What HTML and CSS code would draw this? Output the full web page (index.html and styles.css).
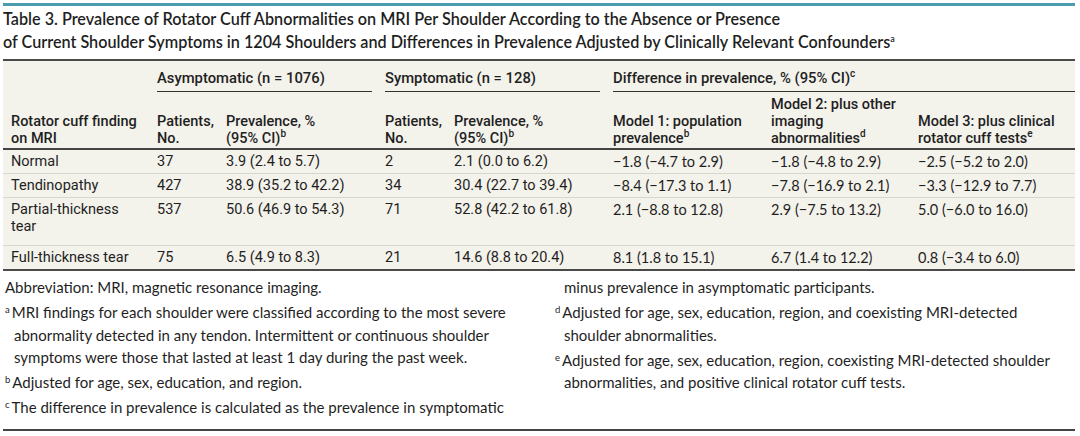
FILE: index.html
```html
<!DOCTYPE html>
<html lang="en">
<head>
<meta charset="utf-8">
<title>Table 3</title>
<link rel="stylesheet" href="styles.css">
</head>
<body>
<div class="page">
  <div class="topbar"></div>
  <h1 class="title">Table 3. Prevalence of Rotator Cuff Abnormalities on MRI Per Shoulder According to the Absence or Presence<br>of Current Shoulder Symptoms in 1204 Shoulders and Differences in Prevalence Adjusted by Clinically Relevant Confounders<sup>a</sup></h1>
  <table class="data">
    <colgroup>
      <col class="c1"><col class="c2"><col class="c3"><col class="c4"><col class="c5"><col class="c6"><col class="c7"><col class="c8">
    </colgroup>
    <thead>
      <tr class="group-row">
        <th></th>
        <th colspan="2"><span class="group">Asymptomatic (n = 1076)</span></th>
        <th colspan="2"><span class="group">Symptomatic (n = 128)</span></th>
        <th colspan="3"><span class="group last">Difference in prevalence, % (95% CI)<sup>c</sup></span></th>
      </tr>
      <tr class="head-row">
        <th class="first">Rotator cuff finding<br>on MRI</th>
        <th>Patients,<br>No.</th>
        <th>Prevalence, %<br>(95% CI)<sup>b</sup></th>
        <th>Patients,<br>No.</th>
        <th>Prevalence, %<br>(95% CI)<sup>b</sup></th>
        <th>Model 1: population<br>prevalence<sup>b</sup></th>
        <th>Model 2: plus other<br>imaging<br>abnormalities<sup>d</sup></th>
        <th>Model 3: plus clinical<br>rotator cuff tests<sup>e</sup></th>
      </tr>
    </thead>
    <tbody>
      <tr>
        <td class="first">Normal</td><td>37</td><td>3.9 (2.4 to 5.7)</td><td>2</td><td>2.1 (0.0 to 6.2)</td>
        <td class="diff">−1.8 (−4.7 to 2.9)</td><td class="diff">−1.8 (−4.8 to 2.9)</td><td class="diff">−2.5 (−5.2 to 2.0)</td>
      </tr>
      <tr>
        <td class="first">Tendinopathy</td><td>427</td><td>38.9 (35.2 to 42.2)</td><td>34</td><td>30.4 (22.7 to 39.4)</td>
        <td class="diff">−8.4 (−17.3 to 1.1)</td><td class="diff">−7.8 (−16.9 to 2.1)</td><td class="diff">−3.3 (−12.9 to 7.7)</td>
      </tr>
      <tr class="tall">
        <td class="first">Partial-thickness<br>tear</td><td>537</td><td>50.6 (46.9 to 54.3)</td><td>71</td><td>52.8 (42.2 to 61.8)</td>
        <td class="diff">2.1 (−8.8 to 12.8)</td><td class="diff">2.9 (−7.5 to 13.2)</td><td class="diff">5.0 (−6.0 to 16.0)</td>
      </tr>
      <tr>
        <td class="first">Full-thickness tear</td><td>75</td><td>6.5 (4.9 to 8.3)</td><td>21</td><td>14.6 (8.8 to 20.4)</td>
        <td class="diff">8.1 (1.8 to 15.1)</td><td class="diff">6.7 (1.4 to 12.2)</td><td class="diff">0.8 (−3.4 to 6.0)</td>
      </tr>
    </tbody>
  </table>
  <div class="notes">
    <p class="abbr">Abbreviation: MRI, magnetic resonance imaging.</p>
    <p class="fn"><sup>a</sup>MRI findings for each shoulder were classified according to the most severe abnormality detected in any tendon. Intermittent or continuous shoulder symptoms were those that lasted at least 1 day during the past week.</p>
    <p class="fn"><sup>b</sup>Adjusted for age, sex, education, and region.</p>
    <p class="fn"><sup>c</sup>The difference in prevalence is calculated as the prevalence in symptomatic minus prevalence in asymptomatic participants.</p>
    <p class="fn"><sup>d</sup>Adjusted for age, sex, education, region, and coexisting MRI-detected shoulder abnormalities.</p>
    <p class="fn"><sup>e</sup>Adjusted for age, sex, education, region, coexisting MRI-detected shoulder abnormalities, and positive clinical rotator cuff tests.</p>
  </div>
</div>
</body>
</html>
```
FILE: styles.css
```css
html, body {
  margin: 0;
  padding: 0;
  background: #ffffff;
  color: #1f1f1f;
}

.page {
  width: 1072px;
  margin-left: 3px;
  padding-top: 3px;
}

.topbar {
  height: 3px;
  background: #4b9bb1;
}

.title {
  margin: 0 0 6px;
  padding-top: 1px;
  font-family: Lato, "Open Sans", sans-serif;
  font-weight: 600;
  font-size: 16.2px;
  line-height: 23px;
  color: #1f1f1f;
}

.title sup {
  font-size: 9px;
  line-height: 0;
  vertical-align: 6px;
}

.data {
  width: 1072px;
  table-layout: fixed;
  border-collapse: collapse;
  background: #f3f2eb;
  border-top: 2px solid #4a4a4a;
  border-bottom: 2px solid #4a4a4a;
  font-family: Roboto, "DejaVu Sans Condensed", sans-serif;
  font-size: 14.5px;
  color: #1f1f1f;
}

.c1 { width: 154px; }
.c2 { width: 69px; }
.c3 { width: 159px; }
.c4 { width: 69px; }
.c5 { width: 159px; }
.c6 { width: 158px; }
.c7 { width: 147px; }
.c8 { width: 157px; }

.data th {
  font-weight: 500;
  text-align: left;
  padding: 0;
}

.data sup {
  font-size: 10px;
  line-height: 0;
  vertical-align: 6px;
}

.group-row th {
  padding-top: 8px;
  vertical-align: bottom;
}

.group {
  display: block;
  font-size: 14.8px;
  line-height: 18px;
  padding-bottom: 4px;
  border-bottom: 1px solid #333;
  margin-right: 13px;
}

.group.last {
  margin-right: 0;
}

.head-row th {
  vertical-align: bottom;
  line-height: 17px;
  padding-top: 4px;
  padding-bottom: 1px;
  border-bottom: 2px solid #444;
}

.data th.first,
.data td.first {
  padding-left: 8px;
}

.data td {
  padding: 3px 0;
  line-height: 17px;
  vertical-align: top;
  border-bottom: 1px solid #d9d7cd;
  white-space: nowrap;
}

.data tr.tall td {
  padding-bottom: 10px;
}

.data tbody tr:last-child td {
  border-bottom: none;
}

.data td.diff {
  font-family: Lato, "Open Sans", sans-serif;
  font-size: 14.5px;
}

.notes {
  column-count: 2;
  column-gap: 28px;
  column-fill: auto;
  height: 144px;
  padding-top: 5px;
  padding-bottom: 9px;
  border-bottom: 2px solid #444;
  font-family: Lato, "Open Sans", sans-serif;
  font-size: 15px;
  line-height: 22.5px;
  color: #1f1f1f;
  orphans: 1;
  widows: 1;
}

.notes p {
  margin: 0 0 2.5px;
  padding-left: 11px;
  text-indent: -9px;
  orphans: 1;
  widows: 1;
}

.notes p.abbr {
  padding-left: 2px;
  text-indent: 0;
}

.notes sup {
  font-size: 9.5px;
  line-height: 0;
  vertical-align: 5px;
  margin-right: 2px;
}
```
